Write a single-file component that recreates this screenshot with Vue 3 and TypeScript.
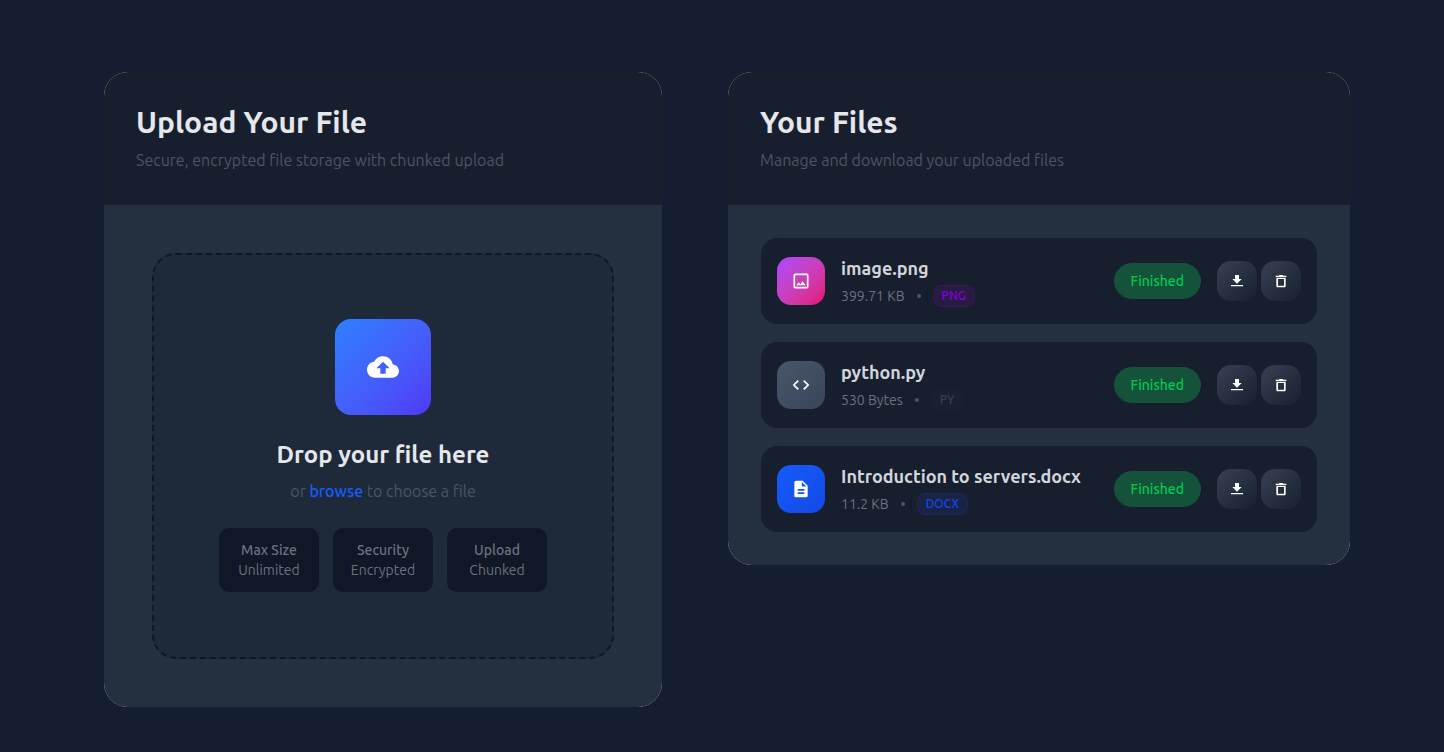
<script setup lang="ts">
interface StoredFile {
  name: string
  size: string
  ext: string
  kind: 'image' | 'code' | 'doc'
}

const files: StoredFile[] = [
  { name: 'image.png', size: '399.71 KB', ext: 'PNG', kind: 'image' },
  { name: 'python.py', size: '530 Bytes', ext: 'PY', kind: 'code' },
  { name: 'Introduction to servers.docx', size: '11.2 KB', ext: 'DOCX', kind: 'doc' },
]

const facts = [
  { label: 'Max Size', value: 'Unlimited' },
  { label: 'Security', value: 'Encrypted' },
  { label: 'Upload', value: 'Chunked' },
]

const kindIcons: Record<StoredFile['kind'], string> = {
  image:
    'M19 19H5V5H19M19 3H5A2 2 0 0 0 3 5V19A2 2 0 0 0 5 21H19A2 2 0 0 0 21 19V5A2 2 0 0 0 19 3M13.96 12.29L11.21 15.83L9.25 13.47L6.5 17H17.5L13.96 12.29Z',
  code: 'M14.6 16.6L19.2 12L14.6 7.4L16 6L22 12L16 18L14.6 16.6M9.4 16.6L4.8 12L9.4 7.4L8 6L2 12L8 18L9.4 16.6Z',
  doc: 'M13 9H18.5L13 3.5V9M6 2H14L20 8V20A2 2 0 0 1 18 22H6C4.89 22 4 21.1 4 20V4C4 2.89 4.89 2 6 2M16 18V16H8V18H16M16 14V12H8V14H16Z',
}
</script>

<template>
  <main class="page">
    <section class="card">
      <header class="card-head">
        <h1>Upload Your File</h1>
        <p>Secure, encrypted file storage with chunked upload</p>
      </header>
      <div class="upload-body">
        <div class="dropzone">
          <div class="cloud">
            <svg viewBox="0 0 24 24" width="32" height="32" fill="currentColor" aria-hidden="true">
              <path d="M19.35 10.04C18.67 6.59 15.64 4 12 4 9.11 4 6.6 5.64 5.35 8.04 2.34 8.36 0 10.91 0 14c0 3.31 2.69 6 6 6h13c2.76 0 5-2.24 5-5 0-2.64-2.05-4.78-4.65-4.96zM14 13v4h-4v-4H7l5-5 5 5h-3z" />
            </svg>
          </div>
          <h2>Drop your file here</h2>
          <p class="hint">or <a href="#">browse</a> to choose a file</p>
          <dl class="facts">
            <div v-for="f in facts" :key="f.label" class="fact">
              <dt>{{ f.label }}</dt>
              <dd>{{ f.value }}</dd>
            </div>
          </dl>
        </div>
      </div>
    </section>

    <section class="card">
      <header class="card-head">
        <h1>Your Files</h1>
        <p>Manage and download your uploaded files</p>
      </header>
      <ul class="files">
        <li v-for="f in files" :key="f.name" class="file">
          <div class="thumb" :class="f.kind">
            <svg viewBox="0 0 24 24" width="20" height="20" fill="currentColor" aria-hidden="true">
              <path :d="kindIcons[f.kind]" />
            </svg>
          </div>
          <div class="info">
            <h3>{{ f.name }}</h3>
            <div class="meta">
              <span>{{ f.size }}</span>
              <span class="dot"></span>
              <span class="tag" :class="f.kind">{{ f.ext }}</span>
            </div>
          </div>
          <span class="status">Finished</span>
          <div class="actions">
            <button type="button" :aria-label="'Download ' + f.name">
              <svg viewBox="0 0 24 24" width="16" height="16" fill="currentColor" aria-hidden="true">
                <path d="M19 9h-4V3H9v6H5l7 7 7-7zM3 18v2h18v-2H3z" />
              </svg>
            </button>
            <button type="button" :aria-label="'Delete ' + f.name">
              <svg viewBox="0 0 24 24" width="16" height="16" fill="currentColor" aria-hidden="true">
                <path d="M15.5 4l-1-1h-5l-1 1H4v2h16V4zM5 19c0 1.500.9 2.500 2 2.500h10c1.100 0 2-1 2-2.500V7H5v12zM7.500 9h9v10h-9z" fill-rule="evenodd" />
              </svg>
            </button>
          </div>
        </li>
      </ul>
    </section>
  </main>
</template>

<style>
body {
  margin: 0;
  background: #151e30;
}
</style>

<style scoped>
.page {
  box-sizing: border-box;
  min-height: 100vh;
  padding: 72px 94px 44px 104px;
  display: grid;
  grid-template-columns: 558fr 622fr;
  gap: 66px;
  align-items: start;
  font-family: Ubuntu, 'Noto Sans', 'Open Sans', sans-serif;
  font-size: 14px;
  line-height: 20px;
  color: #e5e7eb;
}
h1, h2, h3, p, dl, dd, ul {
  margin: 0;
  padding: 0;
}
.card {
  border-radius: 24px;
  overflow: hidden;
  background: #d1d5dc;
}
.card-head {
  padding: 32px 32px 33px;
  background: #171f2e;
}
h1 {
  font-size: 30px;
  line-height: 36px;
  font-weight: 700;
}
.card-head p {
  margin-top: 8px;
  font-size: 16px;
  line-height: 24px;
  color: #4a5565;
}
.upload-body {
  padding: 48px;
  background: #24303f;
}
.dropzone {
  display: flex;
  flex-direction: column;
  align-items: center;
  padding: 64px 24px 65px;
  border: 2px dashed #101828;
  border-radius: 24px;
  background: #1e2939;
}
.cloud {
  display: grid;
  place-items: center;
  width: 96px;
  height: 96px;
  border-radius: 16px;
  color: #ffffff;
  background: linear-gradient(135deg in oklab, #2b7fff, #4f39f6);
}
h2 {
  margin-top: 24px;
  font-size: 24px;
  line-height: 32px;
  font-weight: 700;
}
.hint {
  margin-top: 8px;
  font-size: 16px;
  line-height: 24px;
  color: #4a5565;
}
.hint a {
  color: #155dfc;
  font-weight: 500;
  text-decoration: none;
}
.facts {
  display: flex;
  gap: 14px;
  margin-top: 25px;
}
.fact {
  box-sizing: border-box;
  width: 100px;
  padding: 12px 0;
  border-radius: 10px;
  background: #101727;
  text-align: center;
  color: #6a7282;
}
.fact dt {
  font-weight: 500;
}
.files {
  display: flex;
  flex-direction: column;
  gap: 18px;
  padding: 33px;
  background: #24303f;
  list-style: none;
}
.file {
  display: flex;
  align-items: center;
  padding: 16px;
  border-radius: 16px;
  background: #171e2e;
}
.thumb {
  display: grid;
  place-items: center;
  flex: none;
  width: 48px;
  height: 48px;
  border-radius: 14px;
  color: #ffffff;
}
.thumb.image {
  background: linear-gradient(135deg in oklab, #ad46ff, #e60076);
}
.thumb.code {
  background: linear-gradient(135deg in oklab, #4a5568, #37465c);
}
.thumb.doc {
  background: linear-gradient(135deg in oklab, #155dfc, #1447e6);
}
.info {
  flex: 1;
  min-width: 0;
  margin-left: 16px;
}
h3 {
  font-size: 18px;
  line-height: 28px;
  font-weight: 600;
  color: #d1d5dc;
  white-space: nowrap;
}
.meta {
  display: flex;
  align-items: center;
  height: 24px;
  margin-top: 2px;
  color: #6a7282;
}
.dot {
  width: 4px;
  height: 4px;
  margin: 0 12px;
  border-radius: 50%;
  background: #4a5565;
}
.tag {
  padding: 2px 8px;
  border: 1px solid;
  border-radius: 8px;
  font-size: 12px;
  line-height: 16px;
  font-weight: 500;
}
.tag.image {
  color: #8200db;
  background: #291a44;
  border-color: #341c4c;
}
.tag.code {
  color: #364153;
  background: #192030;
  border-color: #192030;
}
.tag.doc {
  color: #1447e6;
  background: #182346;
  border-color: #1b2a55;
}
.status {
  padding: 7px 16px;
  border: 1px solid #14523a;
  border-radius: 18px;
  font-weight: 500;
  color: #00c950;
  background: #14523a;
}
.actions {
  display: flex;
  gap: 4px;
  margin-left: 16px;
}
button {
  display: grid;
  place-items: center;
  width: 40px;
  height: 40px;
  padding: 0;
  border: 0;
  border-radius: 14px;
  color: #ffffff;
  background: linear-gradient(135deg in oklab, #364153, #182030);
  cursor: pointer;
}
</style>
